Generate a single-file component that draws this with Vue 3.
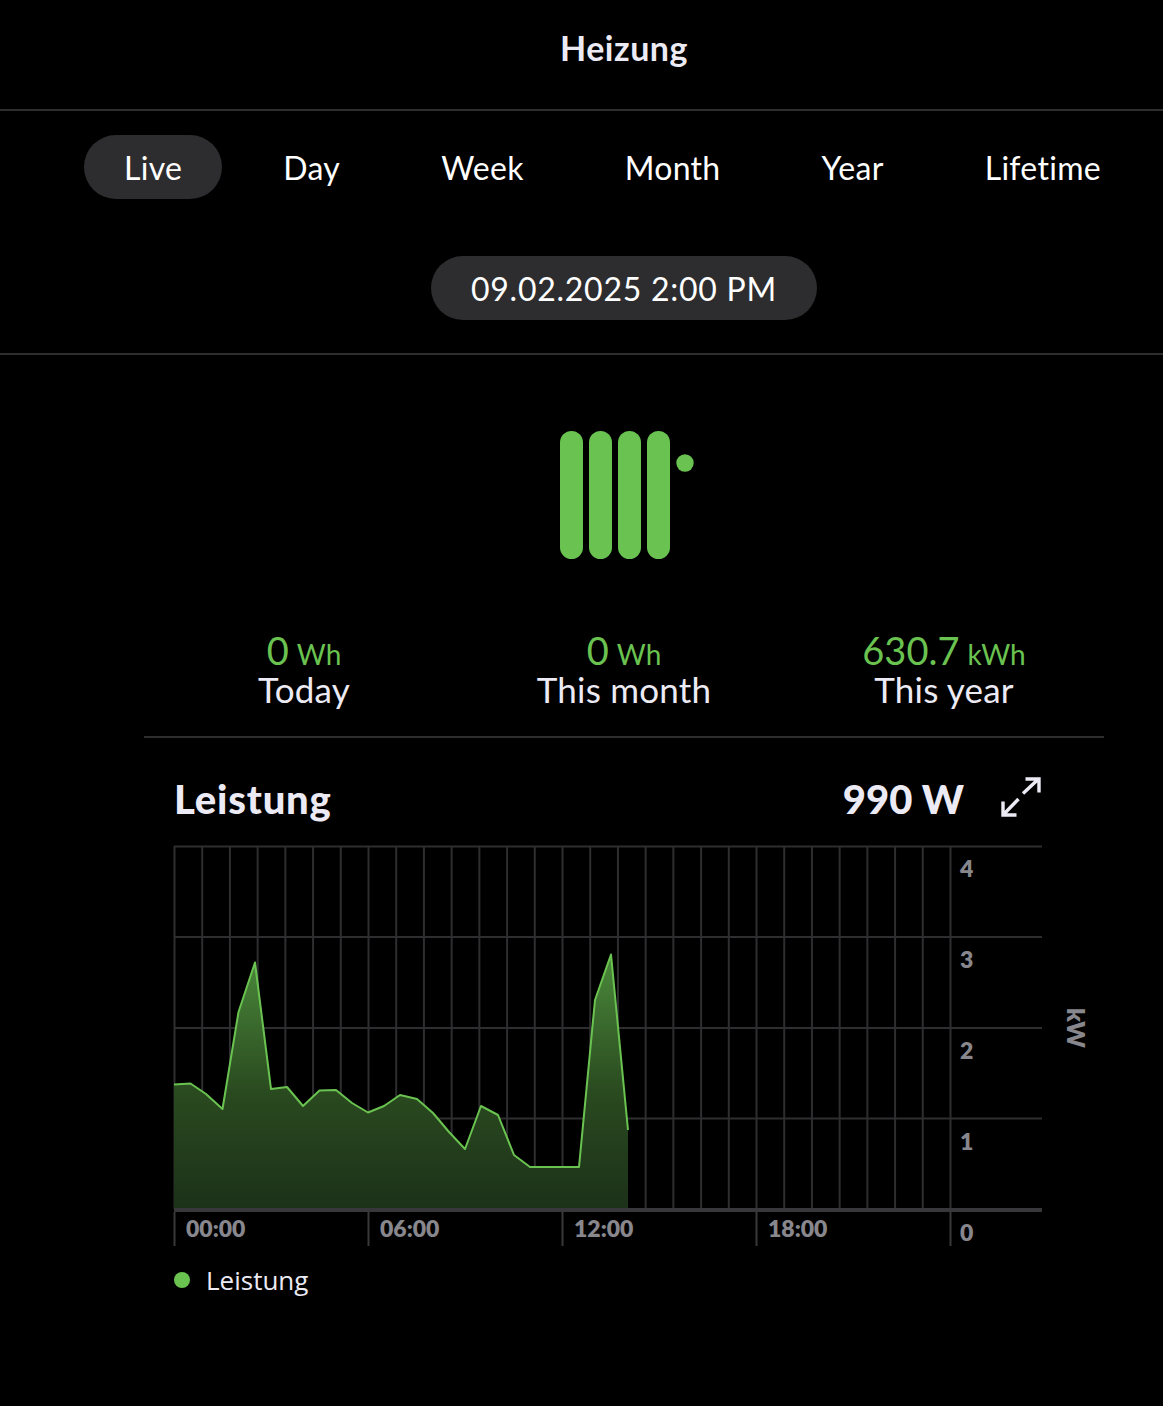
<script setup>
const tabs = ['Live', 'Day', 'Week', 'Month', 'Year', 'Lifetime']
const stats = [
  { value: '0', unit: 'Wh', label: 'Today' },
  { value: '0', unit: 'Wh', label: 'This month' },
  { value: '630.7', unit: 'kWh', label: 'This year' }
]
const x0 = 174.5
const step = (950.5 - 174.5) / 28
const vLines = Array.from({ length: 29 }, (_, i) => x0 + i * step)
const hLines = [846.5, 937, 1028, 1118.5]
const ticks = [174.5, 368.5, 562.5, 756.5, 950.5]
const xLabels = [
  { x: 186, t: '00:00' },
  { x: 380, t: '06:00' },
  { x: 574, t: '12:00' },
  { x: 768, t: '18:00' }
]
const yLabels = [
  { y: 877, t: '4' },
  { y: 968, t: '3' },
  { y: 1059, t: '2' },
  { y: 1150, t: '1' },
  { y: 1241, t: '0' }
]
const pts = [[174,1084.5],[190.5,1083.5],[206,1094],[222.5,1109],[238.5,1012],[255,962.5],[271,1089],[287,1087],[303,1106],[319.5,1090.5],[336,1090],[352,1103],[368,1112.5],[384,1106],[400,1095],[417,1099],[433,1113],[449,1132],[465,1149],[481,1106],[498,1115],[514,1155],[530,1167],[579,1167],[595,1000],[611,954.5],[628,1130]]
const line = pts.map(p => p.join(',')).join(' ')
const area = `174,1209 ${line} 628,1209`
</script>

<template>
  <div class="page">
    <header class="head"><h1>Heizung</h1></header>
    <section class="controls">
      <nav class="tabs">
        <span v-for="(t, i) in tabs" :key="t" class="tab" :class="{ active: i === 0 }">{{ t }}</span>
      </nav>
      <div class="date-row"><span class="date">09.02.2025 2:00 PM</span></div>
    </section>
    <main class="main">
      <div class="icon-row">
        <svg width="134" height="128" viewBox="0 0 134 128">
          <rect x="0" y="0" width="23" height="128" rx="11.5" fill="#6ac350" />
          <rect x="29" y="0" width="23" height="128" rx="11.5" fill="#6ac350" />
          <rect x="58" y="0" width="23" height="128" rx="11.5" fill="#6ac350" />
          <rect x="87" y="0" width="23" height="128" rx="11.5" fill="#6ac350" />
          <circle cx="125" cy="32" r="8.7" fill="#6ac350" />
        </svg>
      </div>
      <div class="stats">
        <div v-for="s in stats" :key="s.label" class="stat">
          <div class="val"><span class="num">{{ s.value }}</span> <span class="unit">{{ s.unit }}</span></div>
          <div class="lbl">{{ s.label }}</div>
        </div>
      </div>
      <section class="card">
        <div class="card-head">
          <h2>Leistung</h2>
          <div class="card-right">
            <span class="power">990 W</span>
            <svg class="expand" width="40" height="40" viewBox="0 0 40 40" fill="none" stroke="#ecebf5" stroke-width="3.4">
              <path d="M22 16.5 37.5 2M24.5 2H38V15.5M17.5 22 2 38M2 24.5V38H15.5" />
            </svg>
          </div>
        </div>
        <svg class="chart" width="960" height="410" viewBox="144 840 960 410">
          <defs>
            <linearGradient id="fillG" x1="0" y1="954" x2="0" y2="1209" gradientUnits="userSpaceOnUse">
              <stop offset="0" stop-color="#4b8a3b" />
              <stop offset="0.55" stop-color="#29491f" />
              <stop offset="1" stop-color="#1c3119" />
            </linearGradient>
          </defs>
          <g stroke="#2e2e30" stroke-width="2">
            <line v-for="x in vLines" :key="x" :x1="x" :x2="x" y1="846" y2="1209" />
            <line v-for="y in hLines" :key="y" x1="174" x2="1042" :y1="y" :y2="y" />
          </g>
          <polygon :points="area" fill="url(#fillG)" />
          <polyline :points="line" fill="none" stroke="#6ac350" stroke-width="2" stroke-linejoin="round" />
          <line x1="174" x2="1042" y1="1210" y2="1210" stroke="#38383a" stroke-width="4" />
          <line v-for="x in ticks" :key="x" :x1="x" :x2="x" y1="1212" y2="1246" stroke="#38383a" stroke-width="2" />
          <g class="axis">
            <text v-for="l in xLabels" :key="l.t" :x="l.x" y="1237">{{ l.t }}</text>
            <text v-for="l in yLabels" :key="l.t" x="960" :y="l.y">{{ l.t }}</text>
          </g>
          <text class="kw" transform="translate(1067 1028) rotate(90)" text-anchor="middle">kW</text>
        </svg>
        <div class="legend"><span class="dot"></span><span class="legend-text">Leistung</span></div>
      </section>
    </main>
  </div>
</template>

<style scoped>
.page {
  width: 1163px;
  height: 1406px;
  background: #000;
  color: #fff;
  font-family: "Lato", sans-serif;
  overflow: hidden;
}
.head {
  height: 109px;
  padding-left: 85px;
  border-bottom: 2px solid #2e2e30;
  display: flex;
  justify-content: center;
  box-sizing: content-box;
}
h1 {
  margin: 27px 0 0;
  font-size: 34px;
  line-height: 42px;
  font-weight: 700;
  letter-spacing: 0.5px;
  color: #ecebf5;
}
.controls {
  height: 242px;
  border-bottom: 2px solid #2e2e30;
}
.tabs {
  display: flex;
  gap: 21px;
  padding: 24px 0 0 84px;
}
.tab {
  height: 64px;
  line-height: 66px;
  padding: 0 40px;
  border-radius: 32px;
  font-size: 32px;
  letter-spacing: 0.3px;
}
.active { background: #2d2d2f; }
.date-row {
  display: flex;
  justify-content: center;
  padding: 57px 0 0 85px;
}
.date {
  height: 64px;
  line-height: 66px;
  padding: 0 40px;
  border-radius: 32px;
  background: #2d2d2f;
  font-size: 32px;
  letter-spacing: 0.75px;
}
.main { padding: 0 59px 0 144px; }
.icon-row {
  display: flex;
  justify-content: center;
  padding: 76px 0 0 6px;
}
.stats {
  display: grid;
  grid-template-columns: repeat(3, 1fr);
  margin-top: 71px;
  padding-bottom: 28px;
  border-bottom: 2px solid #2e2e30;
  text-align: center;
}
.val { color: #6ac350; line-height: 40px; height: 40px; }
.num { font-size: 38px; }
.unit { font-size: 28px; margin-left: 4px; }
.lbl { font-size: 35px; line-height: 38px; color: #ecebf5; letter-spacing: 0.2px; }
.card-head {
  display: flex;
  justify-content: space-between;
  align-items: center;
  box-sizing: border-box;
  height: 102px;
  padding: 20px 63px 0 30px;
}
h2, .power {
  margin: 0;
  font-size: 40px;
  font-weight: 900;
  color: #ecebf5;
}
h2 { letter-spacing: 0.8px; }
.card-right { display: flex; align-items: center; gap: 37px; }
.expand { margin-bottom: 4px; }
.chart { display: block; }
.axis text {
  font-family: "Lato", sans-serif;
  font-size: 23px;
  font-weight: 800;
  fill: #88878d;
}
.kw {
  font-family: "Lato", sans-serif;
  font-size: 25px;
  font-weight: 800;
  fill: #88878d;
}
.legend {
  display: flex;
  align-items: center;
  gap: 16px;
  padding-left: 30px;
  margin-top: 12px;
}
.dot {
  width: 16px;
  height: 16px;
  border-radius: 50%;
  background: #6ac350;
}
.legend-text {
  font-family: "Open Sans", sans-serif;
  font-size: 26px;
  color: #ecebf5;
}
</style>
